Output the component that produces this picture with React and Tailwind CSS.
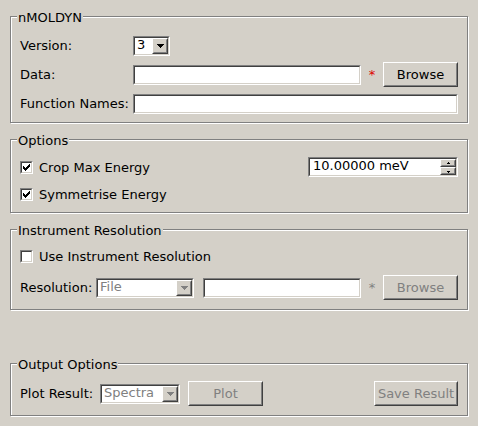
import React from "react";

const OUT_SUNK = "border border-t-[#808080] border-l-[#808080] border-b-white border-r-white";
const IN_SUNK = "border border-t-[#404040] border-l-[#404040] border-b-[#d4d0c8] border-r-[#d4d0c8]";
const OUT_RAISE = "border border-t-white border-l-white border-b-[#404040] border-r-[#404040]";
const IN_RAISE = "border border-t-[#d4d0c8] border-l-[#d4d0c8] border-b-[#808080] border-r-[#808080]";

function Group({ title, className = "", children }) {
  return (
    <div
      className={`relative shrink-0 border border-[#808080] shadow-[inset_1px_1px_0_#ffffff,1px_1px_0_#ffffff] pl-[9px] pr-[9px] ${className}`}
    >
      <span className="absolute left-[6px] top-[-7px] bg-[#d4d0c8] px-[1px] leading-[15px]">{title}</span>
      {children}
    </div>
  );
}

function LineEdit({ className = "" }) {
  return (
    <div className={`h-[20px] ${OUT_SUNK} ${className}`}>
      <div className={`h-full w-full bg-white ${IN_SUNK}`} />
    </div>
  );
}

function Button({ className = "", disabled, children }) {
  return (
    <div className={`h-[25px] ${OUT_RAISE} ${className}`}>
      <div
        className={`flex h-full w-full items-center justify-center ${IN_RAISE} ${disabled ? "text-[#808080]" : "text-black"}`}
      >
        {children}
      </div>
    </div>
  );
}

function DownArrow({ color }) {
  return (
    <svg width="7" height="4" viewBox="0 0 7 4" shapeRendering="crispEdges">
      <rect x="0" y="0" width="7" height="1" fill={color} />
      <rect x="1" y="1" width="5" height="1" fill={color} />
      <rect x="2" y="2" width="3" height="1" fill={color} />
      <rect x="3" y="3" width="1" height="1" fill={color} />
    </svg>
  );
}

function Combo({ value, className = "", disabled }) {
  return (
    <div className={`h-[20px] ${OUT_SUNK} ${className}`}>
      <div className={`flex h-full w-full bg-white ${IN_SUNK}`}>
        <span className={`flex-1 pl-[2px] leading-[14px] ${disabled ? "text-[#808080]" : "text-black"}`}>{value}</span>
        <div className={`h-full w-[16px] ${OUT_RAISE}`}>
          <div className={`flex h-full w-full items-center justify-center bg-[#d4d0c8] ${IN_RAISE}`}>
            <DownArrow color={disabled ? "#808080" : "#000000"} />
          </div>
        </div>
      </div>
    </div>
  );
}

function CheckBox({ checked, label }) {
  return (
    <div className="flex items-center gap-[6px]">
      <div className={`h-[13px] w-[13px] ${OUT_SUNK}`}>
        <div className={`flex h-full w-full items-center justify-center bg-white ${IN_SUNK}`}>
          {checked && (
            <svg width="7" height="7" viewBox="0 0 7 7" shapeRendering="crispEdges">
              <rect x="6" y="0" width="1" height="1" fill="#000" />
              <rect x="5" y="1" width="2" height="1" fill="#000" />
              <rect x="0" y="2" width="1" height="1" fill="#000" />
              <rect x="4" y="2" width="3" height="1" fill="#000" />
              <rect x="0" y="3" width="2" height="1" fill="#000" />
              <rect x="3" y="3" width="3" height="1" fill="#000" />
              <rect x="0" y="4" width="5" height="1" fill="#000" />
              <rect x="1" y="5" width="3" height="1" fill="#000" />
              <rect x="2" y="6" width="1" height="1" fill="#000" />
            </svg>
          )}
        </div>
      </div>
      <span>{label}</span>
    </div>
  );
}

function SpinBtn({ up }) {
  return (
    <div className={`flex-1 ${OUT_RAISE}`}>
      <div className={`flex h-full w-full items-center justify-center bg-[#d4d0c8] ${IN_RAISE}`}>
        <svg width="5" height="3" viewBox="0 0 5 3" shapeRendering="crispEdges">
          {up ? (
            <>
              <rect x="2" y="0" width="1" height="1" fill="#000" />
              <rect x="1" y="1" width="3" height="1" fill="#000" />
            </>
          ) : (
            <>
              <rect x="1" y="1" width="3" height="1" fill="#000" />
              <rect x="2" y="2" width="1" height="1" fill="#000" />
            </>
          )}
        </svg>
      </div>
    </div>
  );
}

function Spin({ value }) {
  return (
    <div className={`h-[20px] w-[150px] ${OUT_SUNK}`}>
      <div className={`flex h-full w-full bg-white ${IN_SUNK}`}>
        <span className="flex-1 pl-[3px] leading-[14px]">{value}</span>
        <div className="flex h-full w-[16px] flex-col">
          <SpinBtn up />
          <SpinBtn />
        </div>
      </div>
    </div>
  );
}

export default function App() {
  return (
    <div className="flex h-[426px] w-[478px] flex-col bg-[#d4d0c8] px-[10px] pt-[16px] pb-[10px] font-['DejaVu_Sans',sans-serif] text-[13px] leading-[15px] text-black">
      <Group title="nMOLDYN" className="pt-[16px] pb-[6px]">
        <div className="flex flex-col gap-[4px]">
          <div className="flex h-[25px] items-center">
            <span className="w-[113px]">Version:</span>
            <Combo value="3" className="w-[37px]" />
          </div>
          <div className="flex h-[25px] items-center">
            <span className="w-[113px]">Data:</span>
            <LineEdit className="w-[228px]" />
            <span className="ml-[6px] w-[10px] text-center text-[#dd0000]">*</span>
            <Button className="ml-[6px] w-[75px]">Browse</Button>
          </div>
          <div className="flex h-[25px] items-center">
            <span className="w-[113px]">Function Names:</span>
            <LineEdit className="flex-1" />
          </div>
        </div>
      </Group>

      <Group title="Options" className="mt-[16px] pt-[15px] pb-[6px]">
        <div className="flex flex-col gap-[3px]">
          <div className="flex h-[24px] items-center justify-between">
            <CheckBox checked label="Crop Max Energy" />
            <Spin value="10.00000 meV" />
          </div>
          <div className="flex h-[24px] items-center">
            <CheckBox checked label="Symmetrise Energy" />
          </div>
        </div>
      </Group>

      <Group title="Instrument Resolution" className="mt-[16px] pt-[14px] pb-[9px]">
        <div className="flex flex-col gap-[6px]">
          <div className="flex h-[25px] items-center">
            <CheckBox label="Use Instrument Resolution" />
          </div>
          <div className="flex h-[25px] items-center">
            <span className="w-[76px]">Resolution:</span>
            <Combo value="File" disabled className="w-[98px]" />
            <LineEdit className="ml-[9px] w-[158px]" />
            <span className="ml-[6px] w-[10px] text-center text-[#808080]">*</span>
            <Button disabled className="ml-[6px] w-[75px]">Browse</Button>
          </div>
        </div>
      </Group>

      <div className="flex-1" />

      <Group title="Output Options" className="pt-[17px] pb-[9px]">
        <div className="flex h-[25px] items-center">
          <span className="w-[80px]">Plot Result:</span>
          <Combo value="Spectra" disabled className="w-[80px]" />
          <Button disabled className="ml-[8px] w-[75px]">Plot</Button>
          <div className="flex-1" />
          <Button disabled className="w-[84px]">Save Result</Button>
        </div>
      </Group>
    </div>
  );
}
